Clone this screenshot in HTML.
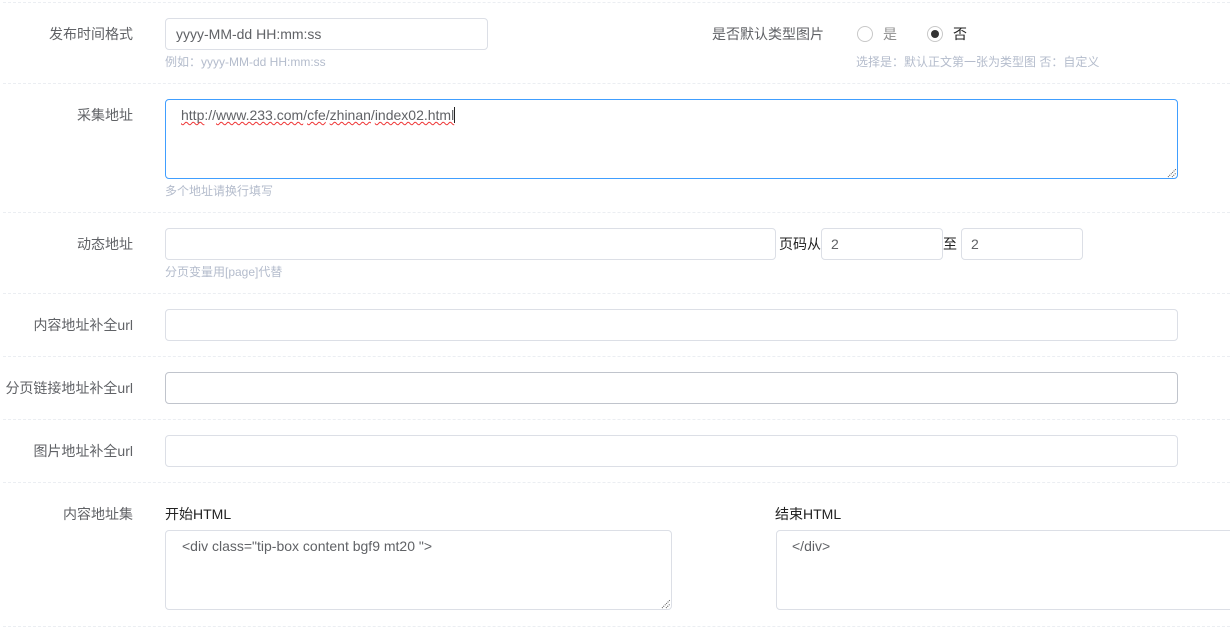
<!DOCTYPE html>
<html>
<head>
<meta charset="utf-8">
<style>
html,body{margin:0;padding:0;background:#fff;width:1230px;height:627px;overflow:hidden;}
body{position:relative;font-family:"Liberation Sans","Noto Sans CJK SC",sans-serif;font-size:14px;color:#606266;}
.a{position:absolute;white-space:nowrap;}
.hr{position:absolute;left:3px;width:1227px;height:0;border-top:1px dashed #ebeef2;}
.l{position:absolute;right:1097px;white-space:nowrap;line-height:20px;color:#606266;text-align:right;}
.b{position:absolute;box-sizing:border-box;border:1px solid #dcdfe6;border-radius:4px;background:#fff;color:#606266;line-height:20px;white-space:nowrap;}
.h{position:absolute;white-space:nowrap;font-size:12px;line-height:16px;color:#b4bccc;}
.t{position:absolute;white-space:nowrap;line-height:20px;color:#222;}
.w{text-decoration:underline wavy #e33;text-decoration-thickness:1px;text-underline-offset:1px;text-decoration-skip-ink:none;}
svg{position:absolute;}
</style>
</head>
<body>
<div class="hr" style="top:2px"></div>
<div class="hr" style="top:83px"></div>
<div class="hr" style="top:212px"></div>
<div class="hr" style="top:293px"></div>
<div class="hr" style="top:356px"></div>
<div class="hr" style="top:419px"></div>
<div class="hr" style="top:482px"></div>
<div class="hr" style="top:626px"></div>

<div class="l" style="top:24px">发布时间格式</div>
<div class="b" style="left:165px;top:18px;width:323px;height:32px;padding:5px 10px;">yyyy-MM-dd HH:mm:ss</div>
<div class="h" style="left:165px;top:54px;">例如：yyyy-MM-dd HH:mm:ss</div>

<div class="a" style="left:712px;top:24px;line-height:20px;">是否默认类型图片</div>
<div class="a" style="left:857px;top:26px;width:16px;height:16px;box-sizing:border-box;border:1px solid #c8c8c8;border-radius:50%;"></div>
<div class="a" style="left:883px;top:24px;line-height:20px;color:#8f8f8f;">是</div>
<div class="a" style="left:927px;top:26px;width:16px;height:16px;box-sizing:border-box;border:1px solid #c8c8c8;border-radius:50%;"></div>
<div class="a" style="left:931px;top:30px;width:8px;height:8px;border-radius:50%;background:#333;"></div>
<div class="a" style="left:953px;top:24px;line-height:20px;color:#222;">否</div>
<div class="h" style="left:856px;top:54px;">选择是：默认正文第一张为类型图 否：自定义</div>

<div class="l" style="top:105px">采集地址</div>
<div class="b" style="left:165px;top:99px;width:1013px;height:80px;border-color:#409eff;padding:5px 15px;"><span class="w">http</span>://<span class="w">www.233.com</span>/<span class="w">cfe</span>/<span class="w">zhinan</span>/<span class="w">index02.html</span></div>
<div class="a" style="left:454px;top:107px;width:1px;height:16px;background:#222;"></div>
<svg style="left:1167px;top:168px" width="10" height="10" viewBox="0 0 10 10"><path d="M1 9L9 1M5 9L9 5" stroke="#555" stroke-width="1" stroke-dasharray="1 1" fill="none"/></svg>
<div class="h" style="left:165px;top:183px;">多个地址请换行填写</div>

<div class="l" style="top:234px">动态地址</div>
<div class="b" style="left:165px;top:228px;width:611px;height:32px;"></div>
<div class="t" style="left:779px;top:234px;">页码从</div>
<div class="b" style="left:821px;top:228px;width:122px;height:32px;padding:5px 9px;">2</div>
<div class="t" style="left:943px;top:234px;">至</div>
<div class="b" style="left:961px;top:228px;width:122px;height:32px;padding:5px 9px;">2</div>
<div class="h" style="left:165px;top:264px;">分页变量用[page]代替</div>

<div class="l" style="top:315px">内容地址补全url</div>
<div class="b" style="left:165px;top:309px;width:1013px;height:32px;"></div>

<div class="l" style="top:378px">分页链接地址补全url</div>
<div class="b" style="left:165px;top:372px;width:1013px;height:32px;border-color:#c0c4cc;"></div>

<div class="l" style="top:441px">图片地址补全url</div>
<div class="b" style="left:165px;top:435px;width:1013px;height:32px;"></div>

<div class="l" style="top:504px">内容地址集</div>
<div class="t" style="left:165px;top:504px;">开始HTML</div>
<div class="b" style="left:165px;top:530px;width:507px;height:80px;padding:5px 16px;">&lt;div class="tip-box content bgf9 mt20 "&gt;</div>
<svg style="left:661px;top:599px" width="10" height="10" viewBox="0 0 10 10"><path d="M1 9L9 1M5 9L9 5" stroke="#555" stroke-width="1" stroke-dasharray="1 1" fill="none"/></svg>
<div class="t" style="left:775px;top:504px;">结束HTML</div>
<div class="b" style="left:776px;top:530px;width:507px;height:80px;padding:5px 15px;">&lt;/div&gt;</div>
</body>
</html>
